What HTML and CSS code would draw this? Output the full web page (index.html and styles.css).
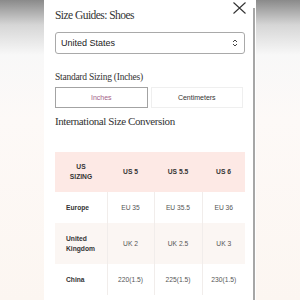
FILE: index.html
```html
<!DOCTYPE html>
<html lang="en">
<head>
    <meta charset="UTF-8">
    <meta name="viewport" content="width=device-width, initial-scale=1.0">
    <title>Size Guide</title>
    <link rel="stylesheet" href="styles.css">
</head>
<body>
    <div class="panel">
        <div class="content">
            <div class="header">
                <h1>Size Guides: Shoes</h1>
                <button type="button" class="close" aria-label="Close">
                    <svg width="13" height="12" viewBox="0 0 13 12">
                        <path d="M0.5 0.5 L12.5 11.5 M12.5 0.5 L0.5 11.5" stroke="#333" stroke-width="1.1" fill="none"/>
                    </svg>
                </button>
            </div>

            <div class="select">
                <span>United States</span>
                <svg width="6" height="8" viewBox="0 0 6 8">
                    <path d="M1 3 L3 1 L5 3 M1 5 L3 7 L5 5" stroke="#444" stroke-width="1" fill="none"/>
                </svg>
            </div>

            <h2 class="sizing">Standard Sizing (Inches)</h2>
            <div class="toggle">
                <button type="button" class="active">Inches</button>
                <button type="button">Centimeters</button>
            </div>

            <h2 class="conversion">International Size Conversion</h2>

            <table class="sizes">
                <colgroup>
                    <col class="c1"><col class="c2"><col class="c3"><col class="c4">
                </colgroup>
                <thead>
                    <tr>
                        <th>US<br>SIZING</th>
                        <th>US 5</th>
                        <th>US 5.5</th>
                        <th>US 6</th>
                    </tr>
                </thead>
                <tbody>
                    <tr>
                        <td class="label">Europe</td>
                        <td>EU 35</td>
                        <td>EU 35.5</td>
                        <td>EU 36</td>
                    </tr>
                    <tr class="alt">
                        <td class="label">United<br>Kingdom</td>
                        <td>UK 2</td>
                        <td>UK 2.5</td>
                        <td>UK 3</td>
                    </tr>
                    <tr>
                        <td class="label">China</td>
                        <td>220(1.5)</td>
                        <td>225(1.5)</td>
                        <td>230(1.5)</td>
                    </tr>
                </tbody>
            </table>
        </div>
        <div class="scrollbar"></div>
    </div>
</body>
</html>
```

FILE: styles.css
```css
body {
    margin: 0;
    height: 300px;
    overflow: hidden;
    background: linear-gradient(#8a8a8a 0, #d6d6d6 25px, #f8f8f8 55px, #fdf9f7 120px, #fcf6f1 300px);
    font-family: 'Liberation Sans', Arial, sans-serif;
}

.panel {
    width: 212px;
    height: 300px;
    margin: 0 auto;
    background-color: white;
    display: flex;
}

.content {
    width: 198px;
    padding-left: 11px;
}

.scrollbar {
    width: 1.5px;
    margin-top: 8px;
    background-color: #a6a6a6;
}

.header {
    display: flex;
    justify-content: space-between;
    align-items: flex-start;
    height: 24px;
}

h1 {
    margin: 8px 0 0 0;
    font-family: 'Liberation Serif', 'Times New Roman', serif;
    font-weight: normal;
    font-size: 11.5px;
    letter-spacing: -0.55px;
    line-height: 14px;
    color: #333;
}

.close {
    border: none;
    background: none;
    padding: 0;
    margin: 2px 7px 0 0;
    width: 13px;
    height: 12px;
    display: flex;
}

.select {
    margin-top: 8px;
    width: 190px;
    height: 22px;
    box-sizing: border-box;
    border: 1px solid #a9a9a9;
    border-radius: 3px;
    display: flex;
    align-items: center;
    justify-content: space-between;
    padding: 0 6px 0 5px;
    font-size: 9px;
    color: #222;
}

h2 {
    font-family: 'Liberation Serif', 'Times New Roman', serif;
    font-weight: normal;
    color: #333;
    margin: 0;
}

.sizing {
    margin-top: 17px;
    font-size: 9.5px;
    letter-spacing: -0.25px;
    line-height: 12px;
}

.toggle {
    margin-top: 4px;
    display: flex;
    gap: 3px;
    width: 188px;
}

.toggle button {
    flex: 1;
    height: 21px;
    background-color: white;
    border: 1px solid #efefef;
    font-family: 'Liberation Sans', Arial, sans-serif;
    font-size: 7px;
    color: #333;
    padding: 0;
}

.toggle button.active {
    border-color: #a3a3a3;
    color: #a46288;
}

.conversion {
    margin-top: 6px;
    font-size: 11px;
    letter-spacing: -0.4px;
    line-height: 14px;
}

.sizes {
    margin-top: 24px;
    width: 190px;
    table-layout: fixed;
    border-collapse: collapse;
    font-size: 6.7px;
    line-height: 10px;
}

.c1 { width: 52px; }
.c2 { width: 47px; }
.c3 { width: 48px; }
.c4 { width: 43px; }

.sizes th {
    background-color: #fde9e5;
    font-weight: bold;
    color: #333;
    padding: 10px 0;
    text-align: center;
}

.sizes td {
    padding: 10.5px 0;
    text-align: center;
    color: #555;
    border-left: 1px solid #f1edeb;
}

.sizes td.label {
    text-align: left;
    padding-left: 11px;
    font-weight: bold;
    color: #333;
    border-left: none;
}

.sizes tr.alt td {
    background-color: #fbf6f3;
}
```
